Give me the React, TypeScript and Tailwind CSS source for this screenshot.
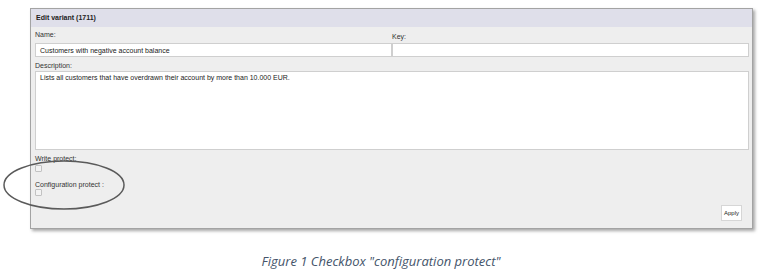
const ui = { fontFamily: '"Liberation Sans", Arial, sans-serif' };

function Checkbox() {
  return <div className="w-[7px] h-[7px] border border-[#c2c2c2] bg-[#f3f3f3] rounded-[1px]" />;
}

export default function App() {
  return (
    <div className="relative w-[762px] h-[275px] bg-white overflow-hidden">
      {/* Dialog */}
      <div
        className="ml-[30px] mt-[8px] w-[723px] h-[221px] flex flex-col bg-[#eeeeee] border border-[#a3a3a3] shadow-[2px_2px_3px_rgba(0,0,0,0.35)]"
        style={ui}
      >
        <div className="h-[18px] shrink-0 bg-[#dfdfea] px-[5px] flex items-center text-[7px] font-bold text-[#222]">
          Edit variant (1711)
        </div>

        <div className="flex-1 flex flex-col pl-[4px] pr-[3px] text-[7px] leading-[9px] text-[#333]">
          <div className="grid grid-cols-2 mt-[3px]">
            <div className="flex flex-col">
              <span className="h-[9px] mb-[4px]">Name:</span>
              <div className="h-[14px] bg-white border border-[#cfcfcf] flex items-center px-[4px] text-[#222]">
                Customers with negative account balance
              </div>
            </div>
            <div className="flex flex-col">
              <span className="h-[9px] mt-[2px] mb-[2px]">Key:</span>
              <div className="h-[14px] bg-white border border-[#cfcfcf]" />
            </div>
          </div>

          <span className="h-[9px] mt-[4px] mb-[1px]">Description:</span>
          <div className="h-[79px] bg-white border border-[#cfcfcf] px-[4px] pt-[1px] text-[#222]">
            Lists all customers that have overdrawn their account by more than 10.000 EUR.
          </div>

          <span className="h-[9px] mt-[4px]">Write protect:</span>
          <div className="mt-[2px]">
            <Checkbox />
          </div>

          <span className="h-[9px] mt-[8px]">Configuration protect :</span>
          <div>
            <Checkbox />
          </div>

          <div className="flex justify-end mt-[9px] pr-[7px]">
            <button className="w-[21px] h-[16px] bg-white border border-[#d6d6d6] text-[6px] text-[#222] flex items-center justify-center">
              Apply
            </button>
          </div>
        </div>
      </div>

      {/* Highlight ellipse */}
      <svg className="absolute left-0 top-0 pointer-events-none" width="762" height="275">
        <ellipse cx="64" cy="185" rx="60" ry="24" fill="none" stroke="#5a5a5a" strokeWidth="1.5" />
      </svg>

      <div
        className="mt-[23px] text-center italic text-[13px] text-[#44546a]"
        style={{ fontFamily: '"Open Sans", "Noto Sans", sans-serif' }}
      >
        Figure 1 Checkbox "configuration protect"
      </div>
    </div>
  );
}
